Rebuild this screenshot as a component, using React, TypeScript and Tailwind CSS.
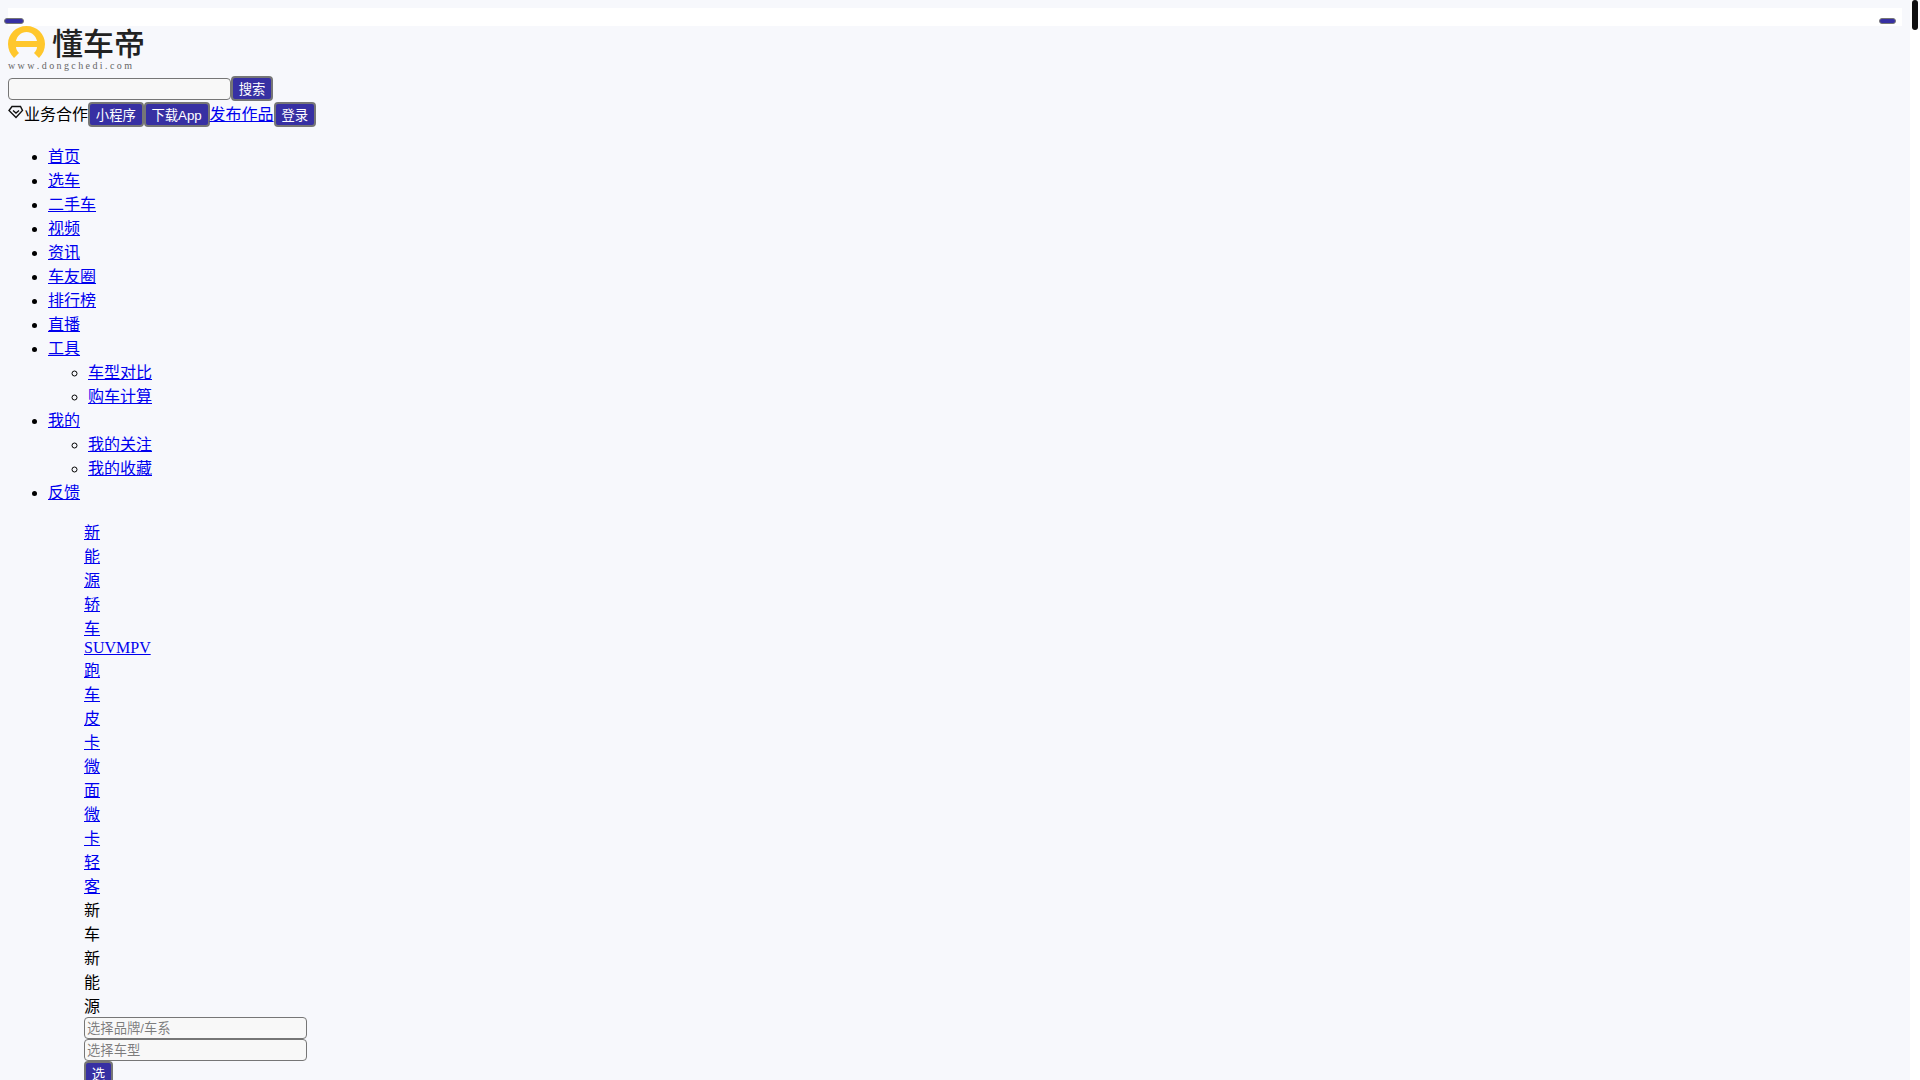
const topLinks = ['首页', '选车', '二手车', '视频', '资讯', '车友圈', '排行榜', '直播'];
const tools = ['车型对比', '购车计算'];
const mine = ['我的关注', '我的收藏'];
const carTypes = ['新能源轿车', 'SUV', 'MPV', '跑车', '皮卡', '微面', '微卡', '轻客'];

function Btn({ children }: { children: React.ReactNode }) {
  return (
    <button className="rounded-[4px] border-2 border-[#767676] bg-[#3730a3] px-[5.8px] py-px font-['Liberation_Sans','Noto_Sans_CJK_SC',sans-serif] text-[13.33px] [line-height:normal] text-white">
      {children}
    </button>
  );
}

function Logo() {
  return (
    <div className="flex h-[32px] items-center">
      <svg width="37" height="32" viewBox="0 0 37 32" className="shrink-0">
        <path
          d="M18.500 0C8 0 0 8 0 18c0 5 2 10 6 14l5-5c-2-2-3-4-3-6h21c0 2-1 4-3 6l5 5c4-4 6-9 6-14C37 8 29 0 18.500 0zM8 15c1-5 5-9 10.500-9S28 10 29 15H8z"
          fill="#ffc72c"
        />
      </svg>
      <span className="ml-[7px] font-['Noto_Sans_CJK_SC',sans-serif] text-[31px] leading-8 font-medium text-[#222]">
        懂车帝
      </span>
    </div>
  );
}

function Badge() {
  return (
    <svg width="16" height="16" viewBox="0 0 16 16" fill="none" stroke="#111" strokeWidth="1.4" className="inline-block">
      <path d="M4 2.500h8.500l2 4-6.500 7-7-7z" />
      <path d="M5 6.500l3 2.500 3-2.500" />
    </svg>
  );
}

function TextLink({ children }: { children: React.ReactNode }) {
  return <a href="#" className="text-[#0000ee] underline">{children}</a>;
}

function TextInput({ placeholder }: { placeholder?: string }) {
  return (
    <input
      placeholder={placeholder}
      className="block h-[22px] w-[223px] rounded-[4px] border border-[#767676] bg-[#f8f8f8] px-0.5 font-['Liberation_Sans','Noto_Sans_CJK_SC',sans-serif] text-[13.33px]"
    />
  );
}

export default function App() {
  return (
    <div className="relative min-h-[1080px] w-[1910px] bg-[#f7f8fc] p-2 font-['Liberation_Serif','Noto_Sans_CJK_SC',serif] text-base [font-kerning:none] [line-height:normal] text-black">
      {/* scrollbar thumb */}
      <div className="absolute top-0 left-[1912px] h-[30px] w-[6px] rounded-[3px] bg-[#111]" />

      <div className="relative h-[18px] bg-white">
        <button className="absolute top-[10px] -left-1 h-[6px] w-5 rounded-[3px] border border-[#767676] bg-[#3730a3]" />
        <button className="absolute top-[10px] right-[6px] h-[6px] w-[17px] rounded-[3px] border border-[#767676] bg-[#3730a3]" />
      </div>

      <Logo />
      <div className="mt-0.5 text-[10px] leading-3 tracking-[2.4px] text-[#666]">www.dongchedi.com</div>

      <div className="mt-1 flex items-center">
        <TextInput />
        <Btn>搜索</Btn>
      </div>

      <div className="flex items-baseline">
        <Badge />
        <span>业务合作</span>
        <Btn>小程序</Btn>
        <Btn>下载App</Btn>
        <TextLink>发布作品</TextLink>
        <Btn>登录</Btn>
      </div>

      <ul className="my-4 list-disc pl-10">
        {topLinks.map((t) => (
          <li key={t}><TextLink>{t}</TextLink></li>
        ))}
        <li>
          <TextLink>工具</TextLink>
          <ul className="list-[circle] pl-10">
            {tools.map((t) => (
              <li key={t}><TextLink>{t}</TextLink></li>
            ))}
          </ul>
        </li>
        <li>
          <TextLink>我的</TextLink>
          <ul className="list-[circle] pl-10">
            {mine.map((t) => (
              <li key={t}><TextLink>{t}</TextLink></li>
            ))}
          </ul>
        </li>
        <li><TextLink>反馈</TextLink></li>
      </ul>

      <div className="ml-[76px] w-4">
        {carTypes.map((t) => (
          <TextLink key={t}>{t}</TextLink>
        ))}
        <div>新车</div>
        <div>新能源</div>
        <TextInput placeholder="选择品牌/车系" />
        <TextInput placeholder="选择车型" />
        <Btn>选</Btn>
      </div>
    </div>
  );
}
